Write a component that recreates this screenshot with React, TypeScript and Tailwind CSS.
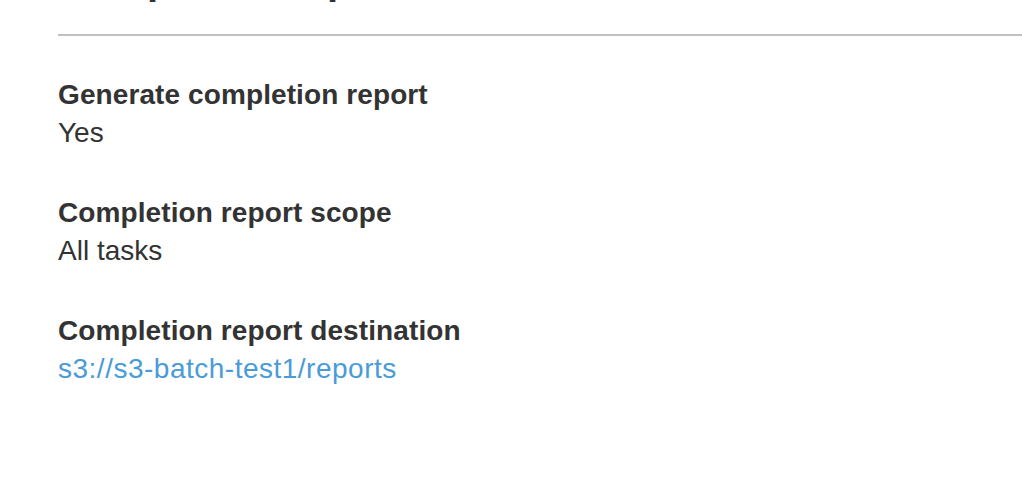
export default function App() {
  const items = [
    { label: "Generate completion report", value: "Yes" },
    { label: "Completion report scope", value: "All tasks" },
    { label: "Completion report destination", value: "s3://s3-batch-test1/reports", link: true },
  ];
  return (
    <div className="h-[490px] w-[1022px] overflow-hidden bg-white pl-[58px] text-[#333333]" style={{ fontFamily: '"Liberation Sans", Arial, Helvetica, sans-serif' }}>
      <div className="-mt-[44px] border-b-2 border-[#c0c0c0] pb-[30px]">
        <h2 className="text-[40px] font-bold leading-[48px]">Completion report</h2>
      </div>
      <div className="pt-[39px]">
        {items.map((it) => (
          <div key={it.label} className="mb-[42px]">
            <div className="text-[28px] font-bold leading-[40px] tracking-[0.1px]">{it.label}</div>
            {it.link ? (
              <a href="#" className="block text-[28px] leading-[36px] tracking-[0.5px] text-[#4a9bd8]">{it.value}</a>
            ) : (
              <div className="text-[28px] leading-[36px]">{it.value}</div>
            )}
          </div>
        ))}
      </div>
    </div>
  );
}
